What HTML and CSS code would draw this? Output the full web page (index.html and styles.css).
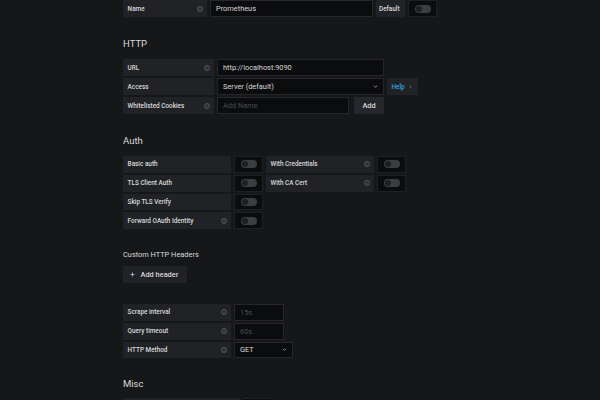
FILE: index.html
```html
<!DOCTYPE html>
<html>
<head>
<meta charset="utf-8">
<link rel="stylesheet" href="styles.css">
</head>
<body>
<div class="page">
  <div class="row row-top">
    <div class="label w-84"><span>Name</span><svg class="info" viewBox="0 0 16 16"><circle cx="8" cy="8" r="6.6"/><line x1="8" y1="7.2" x2="8" y2="11.6"/><circle class="dot" cx="8" cy="4.9" r="0.9"/></svg></div>
    <div class="input w-163">Prometheus</div>
    <div class="label w-29 label-default"><span>Default</span></div>
    <div class="switch"><span class="slider"></span></div>
  </div>

  <h3 class="section-title">HTTP</h3>
  <div class="group group-http">
    <div class="row">
      <div class="label w-91"><span>URL</span><svg class="info" viewBox="0 0 16 16"><circle cx="8" cy="8" r="6.6"/><line x1="8" y1="7.2" x2="8" y2="11.6"/><circle class="dot" cx="8" cy="4.9" r="0.9"/></svg></div>
      <div class="input w-167">http://localhost:9090</div>
    </div>
    <div class="row">
      <div class="label w-91"><span>Access</span></div>
      <div class="input select w-167"><span>Server (default)</span><svg class="chev" viewBox="0 0 10 6"><polyline points="1.5,1.5 5,4.5 8.5,1.5"/></svg></div>
      <div class="label help w-31"><span>Help</span><svg class="help-arrow" viewBox="0 0 6 10"><polyline points="1.5,1.5 4.5,5 1.5,8.5"/></svg></div>
    </div>
    <div class="row">
      <div class="label w-91"><span>Whitelisted Cookies</span><svg class="info" viewBox="0 0 16 16"><circle cx="8" cy="8" r="6.6"/><line x1="8" y1="7.2" x2="8" y2="11.6"/><circle class="dot" cx="8" cy="4.9" r="0.9"/></svg></div>
      <div class="input placeholder w-132">Add Name</div>
      <div class="btn btn-add w-30">Add</div>
    </div>
  </div>

  <h3 class="section-title">Auth</h3>
  <div class="group">
    <div class="row">
      <div class="label w-108"><span>Basic auth</span></div>
      <div class="switch"><span class="slider"></span></div>
      <div class="label w-108"><span>With Credentials</span><svg class="info" viewBox="0 0 16 16"><circle cx="8" cy="8" r="6.6"/><line x1="8" y1="7.2" x2="8" y2="11.6"/><circle class="dot" cx="8" cy="4.9" r="0.9"/></svg></div>
      <div class="switch"><span class="slider"></span></div>
    </div>
    <div class="row">
      <div class="label w-108"><span>TLS Client Auth</span></div>
      <div class="switch"><span class="slider"></span></div>
      <div class="label w-108"><span>With CA Cert</span><svg class="info" viewBox="0 0 16 16"><circle cx="8" cy="8" r="6.6"/><line x1="8" y1="7.2" x2="8" y2="11.6"/><circle class="dot" cx="8" cy="4.9" r="0.9"/></svg></div>
      <div class="switch"><span class="slider"></span></div>
    </div>
    <div class="row">
      <div class="label w-108"><span>Skip TLS Verify</span></div>
      <div class="switch"><span class="slider"></span></div>
    </div>
    <div class="row">
      <div class="label w-108"><span>Forward OAuth Identity</span><svg class="info" viewBox="0 0 16 16"><circle cx="8" cy="8" r="6.6"/><line x1="8" y1="7.2" x2="8" y2="11.6"/><circle class="dot" cx="8" cy="4.9" r="0.9"/></svg></div>
      <div class="switch"><span class="slider"></span></div>
    </div>
  </div>

  <h6 class="sub-title">Custom HTTP Headers</h6>
  <div class="btn btn-header"><svg class="plus" viewBox="0 0 10 10"><line x1="5" y1="1" x2="5" y2="9"/><line x1="1" y1="5" x2="9" y2="5"/></svg><span>Add header</span></div>

  <div class="group group-prom">
    <div class="row">
      <div class="label w-108"><span>Scrape interval</span><svg class="info" viewBox="0 0 16 16"><circle cx="8" cy="8" r="6.6"/><line x1="8" y1="7.2" x2="8" y2="11.6"/><circle class="dot" cx="8" cy="4.9" r="0.9"/></svg></div>
      <div class="input placeholder w-50">15s</div>
    </div>
    <div class="row">
      <div class="label w-108"><span>Query timeout</span><svg class="info" viewBox="0 0 16 16"><circle cx="8" cy="8" r="6.6"/><line x1="8" y1="7.2" x2="8" y2="11.6"/><circle class="dot" cx="8" cy="4.9" r="0.9"/></svg></div>
      <div class="input placeholder w-50">60s</div>
    </div>
    <div class="row">
      <div class="label w-108"><span>HTTP Method</span><svg class="info" viewBox="0 0 16 16"><circle cx="8" cy="8" r="6.6"/><line x1="8" y1="7.2" x2="8" y2="11.6"/><circle class="dot" cx="8" cy="4.9" r="0.9"/></svg></div>
      <div class="input select w-59"><span>GET</span><svg class="chev" viewBox="0 0 10 6"><polyline points="1.5,1.5 5,4.5 8.5,1.5"/></svg></div>
    </div>
  </div>

  <h3 class="section-title section-misc">Misc</h3>
  <div class="group">
    <div class="row">
      <div class="label w-117"></div>
      <div class="switch"><span class="slider"></span></div>
    </div>
  </div>
</div>
</body>
</html>
```

FILE: styles.css
```css
html, body {
  margin: 0;
  padding: 0;
  background: #161719;
  height: 100%;
  overflow: hidden;
}

body {
  font-family: Roboto, "Liberation Sans", sans-serif;
  color: #d8d9da;
  font-size: 7.4px;
}

.page {
  padding-left: 123px;
  display: flex;
  flex-direction: column;
  align-items: flex-start;
}

.group {
  display: flex;
  flex-direction: column;
  gap: 2px;
}

.row {
  display: flex;
  gap: 3px;
  height: 16.75px;
}

.row-top,
.group-http .row {
  height: 17px;
}

.label {
  box-sizing: border-box;
  background: #202226;
  display: flex;
  align-items: center;
  justify-content: space-between;
  padding: 0 4.5px 0 4.6px;
  font-size: 6.4px;
  font-weight: 500;
  color: #d8d9da;
  white-space: nowrap;
  overflow: hidden;
}

.label-default {
  padding: 0 3px;
}

.info {
  width: 6px;
  height: 6px;
  flex: none;
  fill: none;
  stroke: #8e8e8e;
  stroke-width: 1.4;
}

.info .dot {
  fill: #8e8e8e;
  stroke: none;
}

.input {
  box-sizing: border-box;
  background: #0b0c0e;
  border: 1px solid #262628;
  display: flex;
  align-items: center;
  padding: 0 5px;
  color: #d8d9da;
  white-space: nowrap;
}

.placeholder {
  color: #464c54;
}

.select {
  justify-content: space-between;
  padding-right: 5px;
}

.chev {
  width: 5px;
  height: 3px;
  fill: none;
  stroke: #b7b8ba;
  stroke-width: 1.4;
}

.help {
  color: #33a2e5;
  justify-content: flex-start;
  gap: 4px;
  padding-left: 4.5px;
  font-size: 6.4px;
}

.help-arrow {
  width: 2.5px;
  height: 4px;
  fill: none;
  stroke: #33a2e5;
  stroke-width: 1.6;
}

.switch {
  box-sizing: border-box;
  width: 29px;
  background: #0b0c0e;
  border: 1px solid #1f2024;
  display: flex;
  align-items: center;
  justify-content: center;
}

.slider {
  position: relative;
  width: 16px;
  height: 8px;
  border-radius: 4px;
  background: #3b3d42;
}

.slider::before {
  content: "";
  position: absolute;
  left: 1px;
  top: 1px;
  width: 6px;
  height: 6px;
  border-radius: 50%;
  background: #1e1f22;
}

.btn {
  box-sizing: border-box;
  background: #25272b;
  color: #d8d9da;
  font-weight: 500;
  display: flex;
  align-items: center;
  justify-content: center;
  white-space: nowrap;
}

.btn-add {
  margin-left: 2px;
}

.section-title {
  margin: 21px 0 9px;
  font-size: 9.5px;
  line-height: 12px;
  font-weight: 400;
  color: #d8d9da;
}

.section-misc {
  margin: 19.25px 0 8.5px;
}

.sub-title {
  margin: 21px 0 6px;
  font-size: 7.4px;
  line-height: 10px;
  font-weight: 400;
  color: #d8d9da;
}

.btn-header {
  width: 64px;
  height: 17px;
  background: #202226;
  justify-content: flex-start;
  padding-left: 6.5px;
  gap: 6px;
}

.plus {
  width: 5px;
  height: 5px;
  stroke: #d8d9da;
  stroke-width: 1.4;
}

.group-prom {
  margin-top: 21px;
}

.w-29 { width: 29px; }
.w-30 { width: 30px; }
.w-31 { width: 31px; }
.w-50 { width: 50px; }
.w-59 { width: 59px; }
.w-84 { width: 84px; }
.w-91 { width: 91px; }
.w-108 { width: 108px; }
.w-117 { width: 117px; }
.w-132 { width: 132px; }
.w-163 { width: 163px; }
.w-167 { width: 167px; }
```
